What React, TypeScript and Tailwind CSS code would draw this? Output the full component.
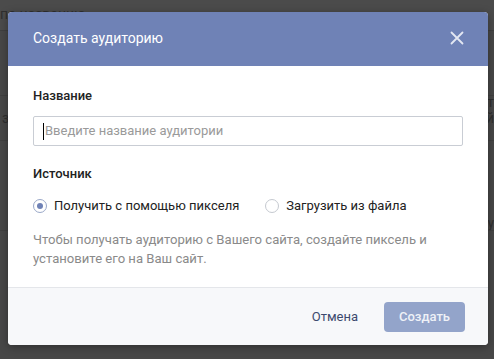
import React from "react";

export default function App() {
  return (
    <div
      className="relative w-[494px] h-[359px] overflow-hidden bg-[#474747]"
      style={{ fontFamily: "Roboto, 'Noto Sans', sans-serif" }}
    >
      {/* faint background page */}
      <div className="absolute inset-0 pointer-events-none">
        <div className="h-[31px] bg-[#4b4b4b] border-b border-[#3f3f3f] text-[14px] text-[#2f2f2f] pl-[0px] pt-[4px]">по названию</div>
        <div className="absolute left-[2px] top-[108px] text-[14px] text-[#2f2f2f]">з</div>
        <div className="absolute right-[0px] top-[92px] text-[14px] text-[#2f2f2f]">т</div>
        <div className="absolute right-[0px] top-[108px] text-[14px] text-[#2f2f2f]">й</div>
        <div className="absolute right-[0px] top-[213px] text-[14px] text-[#2f2f2f]">у</div>
        <div className="absolute left-0 right-0 top-[95px] border-b border-[#404040]" />
        <div className="absolute left-0 right-0 top-[140px] border-b border-[#404040]" />
        <div className="absolute left-0 right-0 top-[230px] border-b border-[#404040]" />
      </div>

      <div className="absolute left-[8px] top-[12px] w-[480px] rounded-[4px] overflow-hidden bg-white shadow-[0_2px_8px_rgba(0,0,0,0.35)]">
        {/* header */}
        <div className="h-[54px] bg-[#6f82b6] flex items-center justify-between pl-[25px] pr-[24px]">
          <span className="text-white text-[14px] leading-none -mt-[2px]">Создать аудиторию</span>
          <svg width="14" height="14" viewBox="0 0 14 14" className="-mt-[2px]">
            <path d="M1.5 1.5 L12.5 12.5 M12.5 1.5 L1.5 12.5" stroke="#e3e7f2" strokeWidth="1.8" strokeLinecap="round" />
          </svg>
        </div>

        {/* body */}
        <div className="px-[25px] pt-[20px] pb-[19px]">
          <div className="text-[13px] font-medium text-[#222] leading-[20px]">Название</div>
          <div className="mt-[10px] h-[30px] border border-[#c9cdd4] rounded-[2px] flex items-center pl-[9px] pr-[9px]">
            <span className="w-px h-[17px] bg-black mr-[1px]" />
            <span className="text-[13px] text-[#9a9a9a]">Введите название аудитории</span>
          </div>

          <div className="mt-[18px] text-[13px] font-medium text-[#222] leading-[20px]">Источник</div>

          <div className="mt-[12px] flex items-center h-[20px]">
            <div className="flex items-center">
              <span className="w-[14px] h-[14px] rounded-full border border-[#9aa8c8] flex items-center justify-center">
                <span className="w-[6px] h-[6px] rounded-full bg-[#6f82b6]" />
              </span>
              <span className="ml-[7px] text-[13px] text-[#222]">Получить с помощью пикселя</span>
            </div>
            <div className="flex items-center ml-[26px]">
              <span className="w-[14px] h-[14px] rounded-full border border-[#c5c9d0]" />
              <span className="ml-[7px] text-[13px] text-[#222]">Загрузить из файла</span>
            </div>
          </div>

          <div className="mt-[14px] text-[13.1px] leading-[19px] text-[#8a8a8a]">
            Чтобы получать аудиторию с Вашего сайта, создайте пиксель и<br />установите его на Ваш сайт.
          </div>
        </div>

        {/* footer */}
        <div className="h-[58px] border-t border-[#e4e6ea] bg-[#f7f8fa] flex items-center justify-end pr-[23px]">
          <span className="text-[13px] text-[#3c4a6e] mr-[26px]">Отмена</span>
          <div className="w-[81px] h-[30px] rounded-[4px] bg-[#93a4ca] flex items-center justify-center text-[13px] font-medium text-[#eef1f7]">
            Создать
          </div>
        </div>
      </div>
    </div>
  );
}
